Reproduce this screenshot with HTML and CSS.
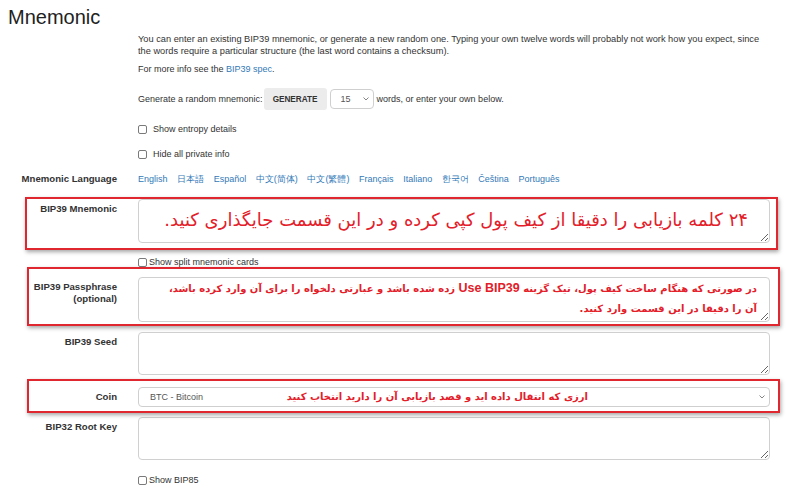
FILE: index.html
```html
<!DOCTYPE html>
<html lang="en">
<head>
<meta charset="utf-8">
<title>Mnemonic</title>
<link rel="stylesheet" href="styles.css">
</head>
<body>
<h1 class="title">Mnemonic</h1>

<div class="block">
  <p class="intro">You can enter an existing BIP39 mnemonic, or generate a new random one. Typing your own twelve words will probably not work how you expect, since<br>the words require a particular structure (the last word contains a checksum).</p>
  <p class="more">For more info see the <a href="#">BIP39 spec</a>.</p>

  <div class="gen">
    <span>Generate a random mnemonic:</span>
    <button class="btn" type="button">GENERATE</button>
    <div class="select-wrap small">
      <select class="select">
        <option>15</option>
      </select>
      <svg class="chev" width="6" height="4" viewBox="0 0 6 4"><path d="M0.5 0.5 L3 3 L5.5 0.5" fill="none" stroke="#777" stroke-width="0.9"/></svg>
    </div>
    <span>words, or enter your own below.</span>
  </div>

  <label class="check gap-lg"><input class="box" type="checkbox"><span>Show entropy details</span></label>
  <label class="check gap-lg"><input class="box" type="checkbox"><span>Hide all private info</span></label>
</div>

<div class="row lang-row">
  <div class="label">Mnemonic Language</div>
  <div class="langs">
    <a href="#">English</a>
    <a href="#">日本語</a>
    <a href="#">Español</a>
    <a href="#">中文(简体)</a>
    <a href="#">中文(繁體)</a>
    <a href="#">Français</a>
    <a href="#">Italiano</a>
    <a href="#">한국어</a>
    <a href="#">Čeština</a>
    <a href="#">Português</a>
  </div>
</div>

<div class="row mnemonic-row">
  <div class="label">BIP39 Mnemonic</div>
  <div class="field-wrap">
    <textarea class="field"></textarea>
    <div class="note note-1" dir="rtl">۲۴ کلمه بازیابی را دقیقا از کیف پول کپی کرده و در این قسمت جایگذاری کنید.</div>
  </div>
</div>

<div class="block">
  <label class="check split"><input class="box" type="checkbox"><span>Show split mnemonic cards</span></label>
</div>

<div class="row pass-row">
  <div class="label">BIP39 Passphrase<br>(optional)</div>
  <div class="field-wrap">
    <textarea class="field"></textarea>
    <div class="note note-2" dir="rtl">در صورتی که هنگام ساخت کیف پول، تیک گزینه <b class="latin">Use BIP39</b> زده شده باشد و عبارتی دلخواه را برای آن وارد کرده باشد،<br>آن را دقیقا در این قسمت وارد کنید.</div>
  </div>
</div>

<div class="row seed-row">
  <div class="label">BIP39 Seed</div>
  <div class="field-wrap">
    <textarea class="field"></textarea>
  </div>
</div>

<div class="row coin-row">
  <div class="label center">Coin</div>
  <div class="select-wrap wide">
    <select class="select">
      <option>BTC - Bitcoin</option>
    </select>
    <svg class="chev" width="6" height="4" viewBox="0 0 6 4"><path d="M0.5 0.5 L3 3 L5.5 0.5" fill="none" stroke="#777" stroke-width="0.9"/></svg>
    <div class="note note-3" dir="rtl">ارزی که انتقال داده اید و قصد بازیابی آن را دارید انتخاب کنید</div>
  </div>
</div>

<div class="row root-row">
  <div class="label">BIP32 Root Key</div>
  <div class="field-wrap">
    <textarea class="field"></textarea>
  </div>
</div>

<div class="block">
  <label class="check split bip85"><input class="box" type="checkbox"><span>Show BIP85</span></label>
</div>

<div class="annot annot-1"></div>
<div class="annot annot-2"></div>
<div class="annot annot-3"></div>
</body>
</html>
```

FILE: styles.css
```css
* { box-sizing: border-box; }

html, body {
  margin: 0;
  padding: 0;
  background: #ffffff;
}

body {
  position: relative;
  width: 800px;
  height: 500px;
  overflow: hidden;
  font-family: "Liberation Sans", Arial, sans-serif;
  font-size: 9px;
  color: #333333;
}

a {
  color: #337ab7;
  text-decoration: none;
}

.title {
  margin: 0;
  padding: 5px 0 0 8px;
  font-size: 20px;
  line-height: 24px;
  font-weight: normal;
  color: #222222;
}

.block {
  margin-left: 138px;
  width: 632px;
}

.intro {
  margin: 4px 0 0;
  font-size: 9.25px;
  line-height: 12px;
}

.more {
  margin: 6px 0 0;
  line-height: 12px;
}

.gen {
  margin-top: 13px;
  height: 22px;
  display: flex;
  align-items: center;
}

.btn {
  margin: 0 3px 0 1px;
  width: 63px;
  height: 22px;
  border: none;
  border-radius: 3px;
  background: #ececec;
  color: #333333;
  font-family: "Liberation Sans", Arial, sans-serif;
  font-size: 8.2px;
  font-weight: bold;
  padding: 0;
}

.select-wrap {
  position: relative;
}

.select-wrap.small {
  width: 44px;
  height: 20px;
  margin-right: 3px;
}

.select {
  appearance: none;
  -webkit-appearance: none;
  width: 100%;
  height: 100%;
  border: 1px solid #cfcfcf;
  border-radius: 4px;
  background: #ffffff;
  color: #555555;
  font-family: "Liberation Sans", Arial, sans-serif;
  font-size: 9px;
  padding: 0 0 0 11px;
  outline: none;
}

.small .select {
  padding-left: 10px;
}

.chev {
  position: absolute;
  right: 5px;
  top: 8px;
}

.check {
  display: flex;
  align-items: center;
  margin-top: 13px;
  height: 12px;
  line-height: 12px;
}

.box {
  appearance: none;
  -webkit-appearance: none;
  width: 9px;
  height: 9px;
  margin: 0 5px 0 0;
  border: 1px solid #7a7a7a;
  border-radius: 2px;
  background: #ffffff;
  flex: none;
}

.gap-lg .box {
  margin-right: 6px;
}

.split .box {
  margin-right: 2px;
}

.row {
  display: grid;
  grid-template-columns: 117px 632px;
  column-gap: 21px;
  align-items: start;
}

.label {
  text-align: right;
  font-weight: bold;
  font-size: 9.6px;
  line-height: 12px;
  padding-top: 4px;
  color: #333333;
}

.label.center {
  align-self: center;
  padding-top: 0;
}

.lang-row {
  margin-top: 13px;
}

.lang-row .label {
  padding-top: 0;
}

.langs {
  display: flex;
  gap: 9.6px;
  line-height: 12px;
}

.mnemonic-row {
  margin-top: 14px;
}

.split {
  margin-top: 13px;
}

.pass-row {
  margin-top: 9px;
}

.seed-row {
  margin-top: 10px;
}

.coin-row {
  margin-top: 12px;
}

.root-row {
  margin-top: 10px;
}

.bip85 {
  margin-top: 14px;
}

.field-wrap {
  position: relative;
}

.field {
  display: block;
  width: 632px;
  height: 44px;
  border: 1px solid #d0d0d0;
  border-radius: 4px;
  resize: vertical;
  padding: 4px 8px;
  font-family: "Liberation Sans", Arial, sans-serif;
  font-size: 9px;
  background: #ffffff;
  outline: none;
}

.pass-row .field { height: 45px; }
.seed-row .field { height: 43px; }
.root-row .field { height: 43px; }

.select-wrap.wide {
  width: 632px;
  height: 20px;
}

.note {
  position: absolute;
  pointer-events: none;
  font-family: "DejaVu Sans", sans-serif;
  color: #e3202a;
  white-space: nowrap;
  text-align: right;
}

.note-1 {
  right: 22px;
  top: 10px;
  font-size: 18px;
  line-height: 22px;
}

.note-2 {
  right: 13px;
  top: 1px;
  font-size: 10px;
  font-weight: bold;
  line-height: 20px;
}

.note-2 .latin {
  font-family: "Liberation Sans", Arial, sans-serif;
  font-size: 12.5px;
}

.note-3 {
  right: 182px;
  top: 1px;
  font-size: 10px;
  font-weight: bold;
  line-height: 18px;
}

.annot {
  position: absolute;
  border: 2px solid #e0262e;
  box-shadow: 1px 2px 4px rgba(0, 0, 0, 0.35);
  pointer-events: none;
}

.annot-1 {
  left: 25px;
  top: 197px;
  width: 753px;
  height: 53px;
}

.annot-2 {
  left: 27px;
  top: 267px;
  width: 753px;
  height: 59px;
}

.annot-3 {
  left: 27px;
  top: 379px;
  width: 753px;
  height: 34px;
}
```
